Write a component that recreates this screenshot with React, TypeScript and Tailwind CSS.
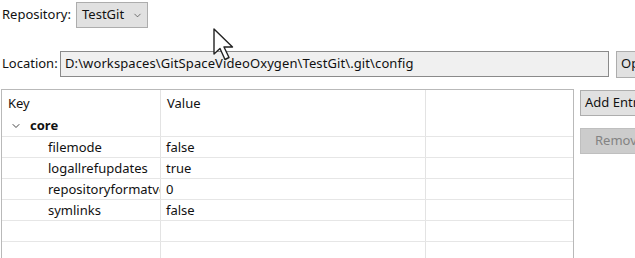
import { ChevronDown } from "lucide-react";

const rows = [
  { key: "filemode", value: "false" },
  { key: "logallrefupdates", value: "true" },
  { key: "repositoryformatversion", value: "0" },
  { key: "symlinks", value: "false" },
  { key: "", value: "" },
  { key: "", value: "" },
];

const Cursor = () => (
  <svg className="absolute left-[213px] top-[28px]" width="22" height="34" viewBox="0 0 22 34">
    <path
      d="M1 1 L1 26 L7 20.5 L12 31.5 L16 29.5 L11 19 L19.5 19 Z"
      fill="#fff"
      stroke="#222"
      strokeWidth="1.4"
      strokeLinejoin="round"
    />
  </svg>
);

export default function App() {
  return (
    <div className="relative w-[635px] h-[258px] overflow-hidden bg-white text-[13px] text-[#111] font-['Noto_Sans',sans-serif]">
      {/* repository */}
      <div className="flex items-center h-[26px] mt-[2px] pl-[2px]">
        <span className="w-[74px] shrink-0">Repository:</span>
        <div className="shrink-0 flex items-center justify-between w-[72px] h-[26px] pl-[5px] pr-[4px] bg-[#e1e1e1] border border-[#adadad]">
          <span>TestGit</span>
          <ChevronDown size={11} strokeWidth={1.4} className="text-[#333]" />
        </div>
      </div>

      {/* location */}
      <div className="flex items-center h-[26px] mt-[23px] pl-[2px]">
        <span className="w-[58px] shrink-0">Location:</span>
        <div className="shrink-0 flex items-center w-[549px] h-[26px] px-[4px] bg-[#f0f0f0] border border-[#8a8a8a] whitespace-nowrap tracking-[0.1px]">
          D:\workspaces\GitSpaceVideoOxygen\TestGit\.git\config
        </div>
        <div className="shrink-0 flex items-center w-[60px] h-[27px] ml-[7px] px-[4px] bg-[#e1e1e1] border border-[#adadad]">
          Open
        </div>
      </div>

      {/* table + side buttons */}
      <div className="flex mt-[12px] pl-[1px]">
        <div className="shrink-0 w-[573px] h-[180px] border-t border-l border-r border-[#b9b9b9] bg-white">
          <div className="grid grid-cols-[159px_265px_1fr] h-[25px]">
            <div className="pl-[6px] pt-[4px] border-r border-[#e3e3e3]">Key</div>
            <div className="pl-[6px] pt-[4px] border-r border-[#e3e3e3]">Value</div>
            <div />
          </div>
          <div className="grid grid-cols-[159px_265px_1fr] h-[22px] border-b border-[#e6e6e6]">
            <div className="flex items-center gap-[8px] pl-[8px] border-r border-[#e3e3e3] font-bold">
              <ChevronDown size={12} strokeWidth={2} className="text-[#444]" />
              core
            </div>
            <div className="border-r border-[#e3e3e3]" />
            <div />
          </div>
          {rows.map((r, i) => (
            <div key={i} className="grid grid-cols-[159px_265px_1fr] h-[21px] border-b border-[#e6e6e6]">
              <div className="pl-[46px] leading-[20px] whitespace-nowrap overflow-hidden border-r border-[#e3e3e3]">
                {r.key}
              </div>
              <div className="pl-[5px] leading-[20px] border-r border-[#e3e3e3]">{r.value}</div>
              <div />
            </div>
          ))}
        </div>

        <div className="flex flex-col gap-[12px] ml-[6px] mt-[1px]">
          <div className="shrink-0 flex items-center w-[80px] h-[26px] px-[4px] bg-[#e1e1e1] border border-[#adadad] whitespace-nowrap">
            Add Entry
          </div>
          <div className="shrink-0 flex items-center w-[80px] h-[26px] pl-[14px] bg-[#cccccc] border border-[#bfbfbf] text-[#838383] whitespace-nowrap">
            Remove
          </div>
        </div>
      </div>

      <Cursor />
    </div>
  );
}
